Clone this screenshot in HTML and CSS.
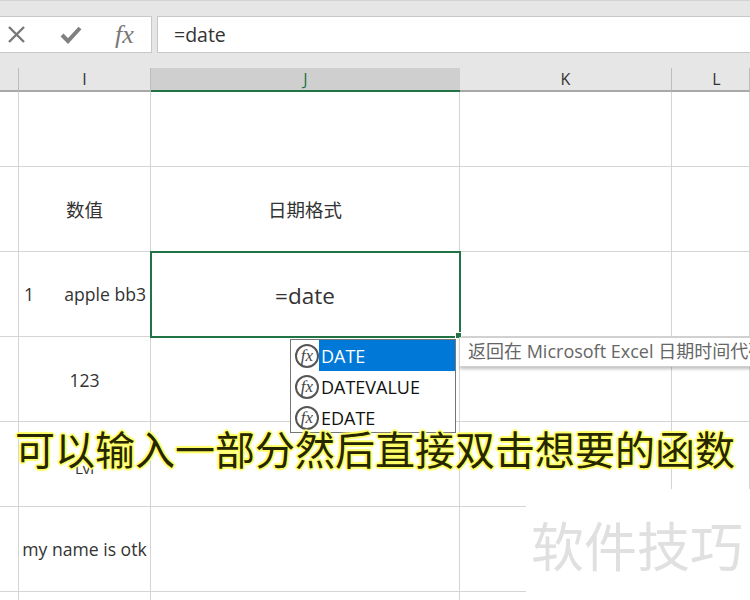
FILE: index.html
```html
<!DOCTYPE html>
<html lang="zh">
<head>
    <meta charset="UTF-8">
    <title>Excel date</title>
    <link rel="stylesheet" href="styles.css">
</head>
<body>
<div class="app">
    <div class="formula-bar">
        <div class="fx-tools">
            <svg class="tool-icon" width="20" height="20" viewBox="0 0 20 20"><path d="M2 2 L17 17 M17 2 L2 17" stroke="#777" stroke-width="2.4" fill="none"/></svg>
            <svg class="tool-icon" width="22" height="20" viewBox="0 0 22 20"><path d="M2 10 L8 16 L20 3" stroke="#808080" stroke-width="4" fill="none"/></svg>
            <span class="tool-fx">fx</span>
        </div>
        <div class="fx-input">=date</div>
    </div>

    <div class="sheet">
        <div class="col-head"></div>
        <div class="col-head">I</div>
        <div class="col-head active">J</div>
        <div class="col-head">K</div>
        <div class="col-head last">L</div>

        <div class="cell"></div><div class="cell"></div><div class="cell"></div><div class="cell"></div><div class="cell"></div>

        <div class="cell"></div><div class="cell center zh">数值</div><div class="cell center zh">日期格式</div><div class="cell"></div><div class="cell"></div>

        <div class="cell"></div>
        <div class="cell split"><span>1</span><span>apple bb3</span></div>
        <div class="cell center selected">=date</div>
        <div class="cell"></div><div class="cell"></div>

        <div class="cell"></div><div class="cell center nudge">123</div><div class="cell"></div><div class="cell"></div><div class="cell"></div>

        <div class="cell"></div><div class="cell center low">Lvl</div><div class="cell"></div><div class="cell"></div><div class="cell"></div>

        <div class="cell"></div><div class="cell center">my name is otk</div><div class="cell"></div><div class="cell"></div><div class="cell"></div>

        <div class="cell"></div><div class="cell"></div><div class="cell"></div><div class="cell"></div><div class="cell"></div>
    </div>

    <!-- autocomplete list -->
    <div class="suggest">
        <div class="suggest-row on"><span class="fn-icon">fx</span><span class="fn-name">DATE</span></div>
        <div class="suggest-row"><span class="fn-icon">fx</span><span class="fn-name">DATEVALUE</span></div>
        <div class="suggest-row"><span class="fn-icon">fx</span><span class="fn-name">EDATE</span></div>
    </div>
    <div class="tip">返回在 Microsoft Excel 日期时间代码中代表日期的数字</div>

    <div class="patch"><span>软件技巧</span></div>
    <div class="caption">可以输入一部分然后直接双击想要的函数</div>
</div>
</body>
</html>
```

FILE: styles.css
```css
body {
    margin: 0;
    background-color: #fff;
    font-family: "Open Sans", "Noto Sans CJK SC", sans-serif;
}

.app {
    position: relative;
    width: 750px;
    height: 600px;
    overflow: hidden;
}

.formula-bar {
    display: flex;
    gap: 5px;
    height: 68px;
    box-sizing: border-box;
    padding-top: 15px;
    padding-bottom: 15px;
    background-color: #e6e6e6;
    border-top: 1px solid #d4d4d4;
}

.fx-tools {
    display: flex;
    align-items: center;
    width: 153px;
    margin-left: -1px;
    box-sizing: border-box;
    padding-left: 7px;
    background-color: #fff;
    border: 1px solid #c8c8c8;
}

.tool-icon {
    flex: none;
}

.tool-icon + .tool-icon {
    margin-left: 33px;
}

.tool-fx {
    margin-left: 33px;
    font-family: "Liberation Serif", serif;
    font-style: italic;
    font-size: 26px;
    color: #777;
}

.fx-input {
    flex: 1;
    display: flex;
    align-items: center;
    padding-left: 16px;
    background-color: #fff;
    border: 1px solid #c8c8c8;
    border-right: none;
    font-size: 19.5px;
    color: #333;
}

.sheet {
    display: grid;
    grid-template-columns: 19px 132px 309px 212px 78px;
    grid-template-rows: 24px 75px repeat(6, 85px);
}

.col-head {
    display: flex;
    justify-content: center;
    align-items: flex-end;
    background-color: #e6e6e6;
    border-right: 1px solid #bdbdbd;
    border-bottom: 2px solid #a8a8a8;
    box-sizing: border-box;
    font-size: 16px;
    color: #333;
}

.col-head.active {
    background-color: #cfcfcf;
    border-right: none;
    border-bottom-color: #217346;
    color: #217346;
}

.col-head.last {
    padding-left: 12px;
}

.cell {
    box-sizing: border-box;
    border-right: 1px solid #d4d4d4;
    border-bottom: 1px solid #d4d4d4;
    font-size: 17.6px;
    color: #333;
}

.center {
    display: flex;
    justify-content: center;
    align-items: center;
    white-space: nowrap;
}

.zh {
    font-size: 18.5px;
}

.nudge {
    padding-top: 2px;
}

.split {
    display: flex;
    justify-content: space-between;
    align-items: center;
    padding: 0 4px 0 5px;
    white-space: nowrap;
}

.low {
    align-items: flex-end;
    padding-bottom: 28px;
    font-size: 15px;
}

.selected {
    position: relative;
    padding-top: 2px;
    font-size: 22.5px;
    outline: 2px solid #217346;
    outline-offset: -1px;
}

/* fill handle */
.selected::after {
    content: "";
    position: absolute;
    right: -3px;
    bottom: -3px;
    width: 5px;
    height: 5px;
    background-color: #217346;
    border: 1px solid #fff;
}

.suggest {
    position: absolute;
    left: 290px;
    top: 339px;
    width: 166px;
    height: 94px;
    box-sizing: border-box;
    background-color: #fff;
    border: 1px solid #767676;
}

.suggest-row {
    display: flex;
    align-items: center;
    height: 31px;
    padding-left: 4px;
    font-size: 18px;
    color: #111;
}

.suggest-row.on .fn-name {
    background-color: #0078d7;
    color: #fff;
}

.fn-icon {
    flex: none;
    width: 20px;
    height: 20px;
    border: 2px solid #555;
    border-radius: 50%;
    text-align: center;
    line-height: 19px;
    font-family: "Liberation Serif", serif;
    font-style: italic;
    font-size: 17px;
    color: #444;
}

.fn-name {
    flex: 1;
    align-self: stretch;
    display: flex;
    align-items: center;
    padding-left: 2px;
}

.tip {
    position: absolute;
    left: 459px;
    top: 337px;
    width: 291px;
    height: 30px;
    box-sizing: border-box;
    padding-left: 8px;
    overflow: hidden;
    background-color: #fff;
    border: 1px solid #d0d0d0;
    border-right: none;
    box-shadow: 1px 2px 3px rgba(0, 0, 0, 0.25);
    line-height: 27px;
    font-size: 18px;
    color: #666;
    white-space: nowrap;
}

.patch {
    position: absolute;
    left: 526px;
    top: 489px;
    right: 0;
    bottom: 0;
    padding: 23px 0 0 5px;
    background-color: #fff;
    font-family: "Noto Sans CJK SC", sans-serif;
    font-size: 53px;
    line-height: 64px;
    color: #e0e0e0;
    white-space: nowrap;
}

.caption {
    position: absolute;
    left: 15px;
    top: 418px;
    font-family: "Noto Sans CJK SC", sans-serif;
    font-size: 40px;
    line-height: 60px;
    color: #262600;
    white-space: nowrap;
    text-shadow: 1px 1px 1px #ff6, -1px -1px 1px #ff6, 1px -1px 1px #ff6, -1px 1px 1px #ff6, 2px 0 1px #ff6, -2px 0 1px #ff6, 0 2px 1px #ff6, 0 -2px 1px #ff6;
}
```
